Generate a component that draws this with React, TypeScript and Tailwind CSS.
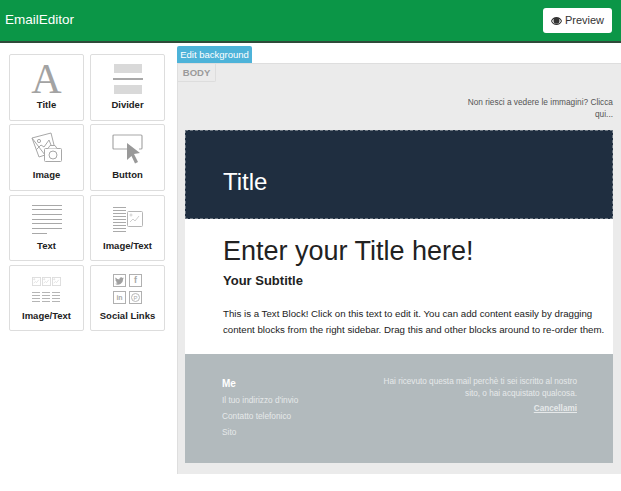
import React from 'react';

const font = 'font-["Liberation_Sans",Arial,sans-serif]';

const TitleIcon = () => (
    <div className="h-[36px] w-[32px] text-center font-['Liberation_Serif',serif] text-[42px] leading-[36px] text-[#a3a3a3]">A</div>
);

const DividerIcon = () => (
    <div className="flex w-[30px] flex-col">
        <div className="h-[9px] mx-[1px] bg-[#d9d9d9]" />
        <div className="mt-[5px] h-[2px] bg-[#a8a8a8]" />
        <div className="mt-[5px] h-[9px] mx-[1px] bg-[#d9d9d9]" />
    </div>
);

const ImageIcon = () => (
    <svg width="32" height="33" viewBox="0 0 32 33" fill="none" stroke="#a8a8a8" strokeWidth="1">
        <path d="M1 6 L20 1 L23 13 M14 23 L8 25 L1 6 Z" />
        <circle cx="8" cy="9" r="1.6" />
        <path d="M5 18 L10 13 L13 15 L18 8 L20 13" />
        <rect x="13.5" y="16.5" width="17" height="13" rx="1" fill="#fff" />
        <path d="M17 16.5 L19 13.5 H24 L26 16.5" fill="#fff" />
        <circle cx="22" cy="23" r="4" />
    </svg>
);

const ButtonIcon = () => (
    <svg width="32" height="30" viewBox="0 0 32 30" fill="none">
        <path d="M16 15 H2 Q1 15 1 14 V2 Q1 1 2 1 H29 Q30 1 30 2 V14 Q30 15 29 15 H27" stroke="#a8a8a8" strokeWidth="1.2" />
        <path d="M15 9 L28 19 L22 20 L26 28 L23 29.5 L19.5 22 L15 26 Z" fill="#999" />
    </svg>
);

const TextIcon = () => (
    <div className="flex w-[30px] flex-col gap-[3.700px]">
        {[0, 1, 2, 3, 4, 5].map((i) => (
            <div key={i} className="h-[1px] w-[30px] bg-[#a8a8a8]" />
        ))}
        <div className="h-[1px] w-[15px] bg-[#a8a8a8]" />
    </div>
);

const Thumb = ({ size }: { size: number }) => (
    <svg width={size} height={size} viewBox="0 0 16 16" fill="none" stroke="#b5b5b5" strokeWidth="1">
        <rect x="0.5" y="0.5" width="15" height="15" rx="1" />
        <path d="M3 11 L6 8 L8 10 L12 5" stroke="#cfcfcf" />
        <circle cx="4" cy="4" r="1" stroke="#cfcfcf" />
    </svg>
);

const ImageTextIcon = () => (
    <div className="flex items-center gap-[1px]">
        <div className="flex w-[13px] flex-col gap-[2px]">
            {Array.from({ length: 9 }).map((_, i) => (
                <div key={i} className="h-[1px] bg-[#aaaaaa]" />
            ))}
        </div>
        <Thumb size={16} />
    </div>
);

const ImageRowIcon = () => (
    <div className="flex flex-col gap-[6px]">
        <div className="flex gap-[1px]">
            <Thumb size={9} />
            <Thumb size={9} />
            <Thumb size={9} />
        </div>
        <div className="flex gap-[2px]">
            {[0, 1, 2].map((c) => (
                <div key={c} className="flex w-[8px] flex-col gap-[2px]">
                    {[0, 1, 2, 3].map((r) => (
                        <div key={r} className="h-[1px] bg-[#b5b5b5]" />
                    ))}
                </div>
            ))}
        </div>
    </div>
);

const socialBox = 'flex h-[13px] w-[13px] items-center justify-center border border-[#b0b0b0] text-[#a8a8a8]';

const SocialIcon = () => (
    <div className="grid grid-cols-2 gap-x-[3px] gap-y-[4px]">
        <div className={socialBox}>
            <svg width="9" height="8" viewBox="0 0 24 20" fill="#a0a0a0">
                <path d="M24 2.4a9.6 9.6 0 0 1-2.8.8A5 5 0 0 0 23.3.5a9.800 9.800 0 0 1-3.100 1.200 4.900 4.900 0 0 0-8.400 4.500A14 14 0 0 1 1.700.9a4.900 4.900 0 0 0 1.500 6.600 4.900 4.900 0 0 1-2.200-.6 4.900 4.900 0 0 0 3.900 4.800 4.900 4.900 0 0 1-2.200.1 4.900 4.900 0 0 0 4.600 3.400A9.900 9.900 0 0 1 0 17.300 14 14 0 0 0 21.600 4.900 10 10 0 0 0 24 2.400z" />
            </svg>
        </div>
        <div className={`${socialBox} text-[9px] font-bold leading-none`}>f</div>
        <div className={`${socialBox} text-[7px] font-bold leading-none`}>in</div>
        <div className={socialBox}>
            <div className="flex h-[9px] w-[9px] items-center justify-center rounded-full border border-[#b8b8b8] text-[6px] leading-none">P</div>
        </div>
    </div>
);

const blocks = [
    { label: 'Title', icon: TitleIcon },
    { label: 'Divider', icon: DividerIcon },
    { label: 'Image', icon: ImageIcon },
    { label: 'Button', icon: ButtonIcon },
    { label: 'Text', icon: TextIcon },
    { label: 'Image/Text', icon: ImageTextIcon },
    { label: 'Image/Text', icon: ImageRowIcon },
    { label: 'Social Links', icon: SocialIcon },
];

const App = () => {
    return (
        <div className={`flex h-[491px] w-[621px] flex-col overflow-hidden bg-white ${font}`}>
            {/* Header */}
            <header className="flex h-[43px] shrink-0 items-center justify-between border-b-2 border-[#2f4a3a] bg-[#0b9647] pl-[5px] pr-[9px]">
                <span className="text-[13.500px] text-white">EmailEditor</span>
                <button className="flex h-[25px] w-[69px] items-center justify-center gap-[3px] rounded-[3px] bg-white text-[11px] text-[#333]">
                    <svg width="11" height="8" viewBox="0 0 22 16" fill="#333">
                        <path d="M11 0C6 0 2 3 0 8c2 5 6 8 11 8s9-3 11-8c-2-5-6-8-11-8zm0 14c-4 0-7-2.500-9-6 1-2 2.500-3.500 4.500-4.500C5.500 4.500 5 6 5 7.500a6 6 0 0 0 12 0c0-1.500-.5-3-1.500-4C17.500 4.500 19 6 20 8c-2 3.500-5 6-9 6z" />
                    </svg>
                    Preview
                </button>
            </header>

            <div className="flex min-h-0 flex-1">
                {/* Blocks */}
                <aside className="grid h-fit w-[177px] shrink-0 grid-cols-[75px_75px] gap-x-[6px] gap-y-[3.800px] pl-[9px] pt-[11px]">
                    {blocks.map((block, i) => (
                        <div key={i} className="flex h-[66.500px] flex-col items-center rounded-[2px] border border-[#dddddd] bg-white">
                            <div className="flex h-[43px] w-full items-center justify-center pt-[4px]">
                                <block.icon />
                            </div>
                            <span className="mt-[1px] text-[9.500px] leading-[12px] font-bold text-[#222]">{block.label}</span>
                        </div>
                    ))}
                </aside>

                {/* Canvas */}
                <main className="flex min-w-0 flex-1 flex-col pt-[3px] pb-[17px]">
                    <button className="h-[17px] w-[75px] shrink-0 rounded-t-[2px] bg-[#4db3d9] text-[9.500px] leading-[17px] text-white">Edit background</button>
                    <div className="min-h-0 flex-1 border-t border-l border-[#dedede] bg-[#ebebeb] pb-[11px]">
                        <div className="h-[18px] w-[38px] rounded-br-[2px] border-r border-b border-[#dddddd] text-center text-[9.500px] leading-[17px] font-bold text-[#9a9a9a]">BODY</div>
                        <p className="mt-[15px] ml-auto w-[158px] pr-[8px] text-right text-[8.300px] leading-[11.500px] text-[#555]">Non riesci a vedere le immagini? Clicca qui...</p>
                        <div className="mt-[10px] ml-[7px] w-[428px]">
                            <div className="flex h-[89px] items-center border border-dashed border-[#6f7984] bg-[#1f2e40] pl-[37px] pt-[14px]">
                                <span className="text-[24px] text-white">Title</span>
                            </div>
                            <div className="h-[135px] bg-white pl-[38px] pr-[3px]">
                                <h1 className="pt-[14px] text-[27px] leading-[36px] text-[#222]">Enter your Title here!</h1>
                                <h2 className="mt-[3px] text-[13px] leading-[18px] font-bold text-[#222]">Your Subtitle</h2>
                                <p className="mt-[16px] text-[9.700px] leading-[16px] text-[#222]">
                                    This is a Text Block! Click on this text to edit it. You can add content easily by dragging content blocks from the right sidebar. Drag this and other blocks around to re-order them.
                                </p>
                            </div>
                            <div className="flex h-[109px] justify-between bg-[#b2babd] pl-[37px] pr-[36px] pt-[23px] text-white">
                                <div className="text-[8.300px]">
                                    <div className="text-[10px] leading-[13px] font-bold">Me</div>
                                    <div className="mt-[2px] leading-[16px] text-[#e6e9ea]">Il tuo indirizzo d'invio</div>
                                    <div className="leading-[16px] text-[#e6e9ea]">Contatto telefonico</div>
                                    <div className="leading-[16px] text-[#e6e9ea]">Sito</div>
                                </div>
                                <div className="-mt-[1px] w-[198px] text-right text-[8.200px] leading-[12px] text-[#e6e9ea]">
                                    <p>Hai ricevuto questa mail perchè ti sei iscritto al nostro sito, o hai acquistato qualcosa.</p>
                                    <a className="mt-[3px] block font-bold underline">Cancellami</a>
                                </div>
                            </div>
                        </div>
                    </div>
                </main>
            </div>
        </div>
    );
};

export default App;
